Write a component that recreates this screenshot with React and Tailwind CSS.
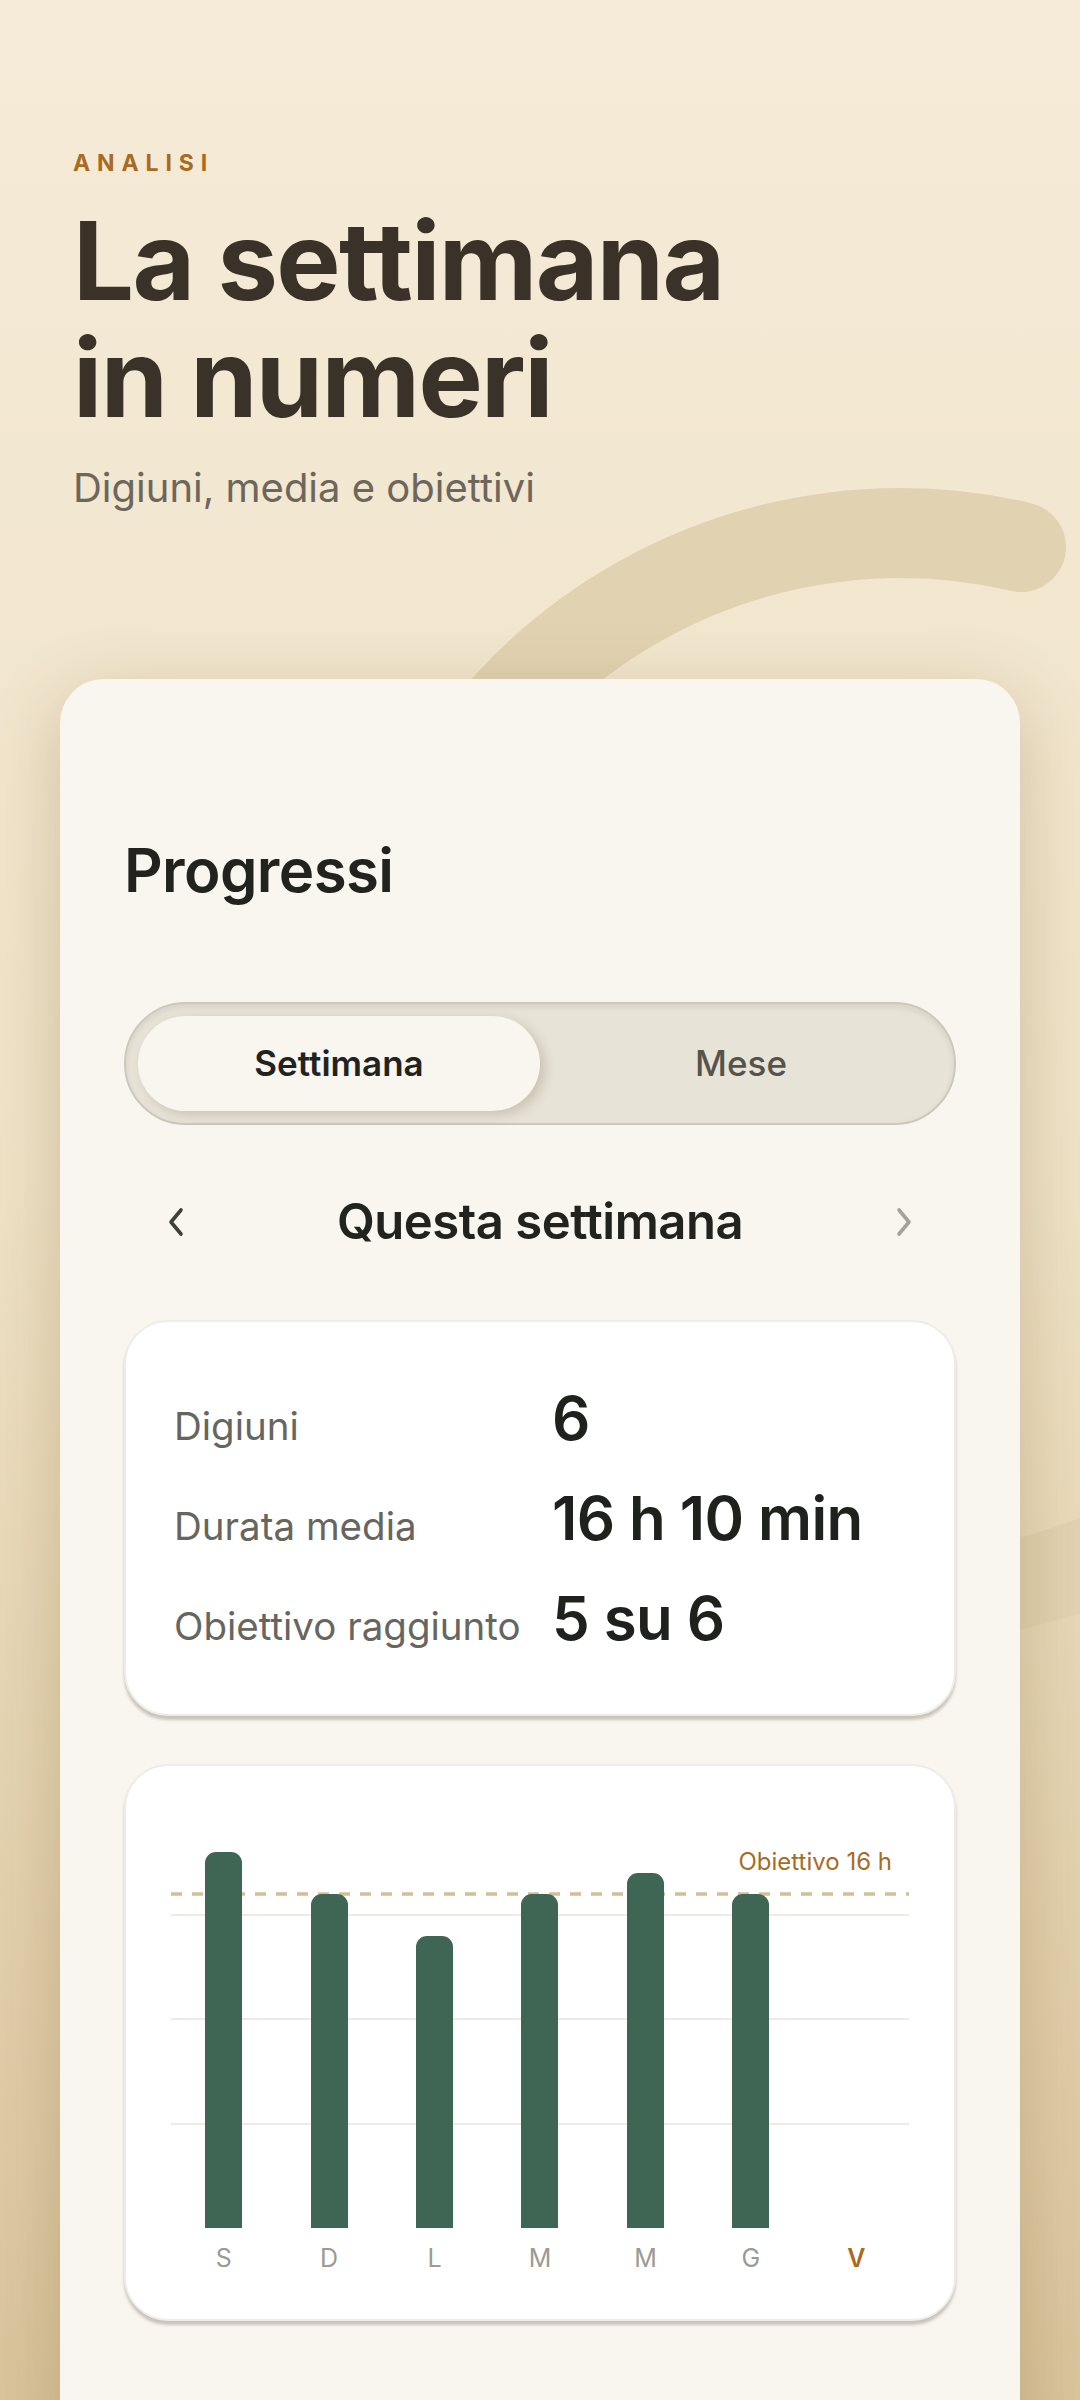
import React from "react";

const days = [
  { d: "S", h: 18 },
  { d: "D", h: 16 },
  { d: "L", h: 14 },
  { d: "M", h: 16 },
  { d: "M", h: 17 },
  { d: "G", h: 16 },
  { d: "V", h: 0, today: true },
];

const PX_PER_H = 20.875;

function Chevron({ dir = "left", color }) {
  return (
    <svg width="18" height="30" viewBox="0 0 18 30" fill="none">
      {dir === "left" ? (
        <polyline points="14,3 4,15 14,27" stroke={color} strokeWidth="3.6" strokeLinecap="round" strokeLinejoin="round" />
      ) : (
        <polyline points="4,3 14,15 4,27" stroke={color} strokeWidth="3.6" strokeLinecap="round" strokeLinejoin="round" />
      )}
    </svg>
  );
}

export default function App() {
  return (
    <div
      className="relative w-[1080px] h-[2400px] overflow-hidden bg-gradient-to-b from-[#f5ebd8] via-[#efe2c6] to-[#d9c49c]"
      style={{ fontFamily: "Inter, 'Noto Sans', sans-serif" }}
    >
      {/* decorative ring */}
      <svg className="absolute left-0 top-0" width="1080" height="2400" viewBox="0 0 1080 2400" fill="none">
        <path
          d="M 1021 547 A 532 532 0 1 0 1361 1331"
          stroke="#e1d2b1"
          strokeWidth="90"
          strokeLinecap="round"
        />
      </svg>

      {/* header */}
      <div className="relative px-[73px] pt-[152px]">
        <div className="text-[23px] leading-none font-bold tracking-[0.3em] text-[#a86b1f]">ANALISI</div>
        <h1 className="mt-[27px] text-[108px] leading-[117px] font-bold tracking-[-0.015em] text-[#3a3129]">
          La settimana
          <br />
          in numeri
        </h1>
        <p className="mt-[32px] text-[40px] leading-none text-[#6d665c]">Digiuni, media e obiettivi</p>
      </div>

      {/* main card */}
      <div className="relative mx-[60px] mt-[171px] h-[1800px] rounded-[44px] bg-[#f9f6ef] shadow-[0_20px_70px_rgba(120,90,40,0.28)] px-[64px] pt-[161px]">
        <h2 className="text-[60px] leading-none font-semibold tracking-[-0.01em] text-[#22231f]">Progressi</h2>

        {/* segmented */}
        <div className="mt-[102px] h-[123px] rounded-full border-2 border-[#cdc8bc] bg-[#e8e3d7] shadow-[inset_0_3px_6px_rgba(0,0,0,0.08)] p-[12px] grid grid-cols-2">
          <div className="rounded-full bg-[#f9f6f0] shadow-[5px_4px_12px_rgba(90,80,60,0.22)] flex items-center justify-center text-[35px] font-semibold text-[#22231f]">
            Settimana
          </div>
          <div className="flex items-center justify-center text-[35px] font-medium text-[#56534c]">Mese</div>
        </div>

        {/* nav */}
        <div className="mt-[72px] flex items-center justify-between px-[43px] h-[49px]">
          <Chevron dir="left" color="#3f3f3a" />
          <div className="text-[49px] leading-none font-semibold tracking-[-0.01em] text-[#22231f]">Questa settimana</div>
          <Chevron dir="right" color="#a3a29c" />
        </div>

        {/* stats card */}
        <div className="mt-[74px] h-[396px] rounded-[44px] bg-white border-2 border-[#eeece6] shadow-[0_4px_3px_rgba(80,70,50,0.28)] pl-[48px] pt-[66px] flex flex-col gap-[40px]">
          {[
            ["Digiuni", "6"],
            ["Durata media", "16 h 10 min"],
            ["Obiettivo raggiunto", "5 su 6"],
          ].map(([l, v]) => (
            <div key={l} className="flex items-baseline h-[60px]">
              <div className="w-[378px] text-[38.5px] leading-none text-[#67665e]">{l}</div>
              <div className="text-[60px] leading-none font-semibold tracking-[-0.01em] text-[#1f211d]">{v}</div>
            </div>
          ))}
        </div>

        {/* chart card */}
        <div className="mt-[48px] h-[557px] rounded-[44px] bg-white border-2 border-[#eeece6] shadow-[0_4px_3px_rgba(80,70,50,0.28)] px-[45px] pt-[44px]">
          <div className="relative h-[418px]">
            {[5, 10, 15].map((h) => (
              <div
                key={h}
                className="absolute left-0 right-0 h-[2px] bg-[#ecebe5]"
                style={{ bottom: h * PX_PER_H - 1 }}
              />
            ))}
            <svg className="absolute left-0 right-0" style={{ bottom: 16 * PX_PER_H - 2 }} width="738" height="4">
              <line x1="0" y1="2" x2="738" y2="2" stroke="#d3bf95" strokeWidth="3.5" strokeDasharray="11 10" />
            </svg>
            <div className="absolute right-[17px] top-[40px] text-[24px] leading-none text-[#a86b1f]">Obiettivo 16 h</div>
            <div className="absolute inset-0 grid grid-cols-7 items-end">
              {days.map((d, i) => (
                <div key={i} className="flex justify-center items-end h-full">
                  {d.h > 0 && (
                    <div
                      className="w-[37px] rounded-t-[11px] bg-[#3f6555]"
                      style={{ height: d.h * PX_PER_H }}
                    />
                  )}
                </div>
              ))}
            </div>
          </div>
          <div className="mt-[18px] grid grid-cols-7">
            {days.map((d, i) => (
              <div
                key={i}
                className={
                  d.today
                    ? "text-center text-[25px] leading-none font-semibold text-[#a86b1f]"
                    : "text-center text-[25px] leading-none text-[#9b9a93]"
                }
              >
                {d.d}
              </div>
            ))}
          </div>
        </div>

        <div className="mt-[76px] text-[56px] leading-none font-semibold text-[#3b3b36]">Come va</div>
      </div>
    </div>
  );
}
